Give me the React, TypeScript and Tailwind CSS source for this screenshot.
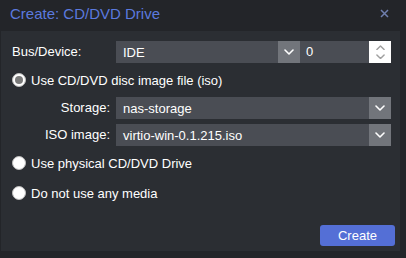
import React from "react";

const Chevron = ({ up = false, color = "#ffffff", w = 10 }: { up?: boolean; color?: string; w?: number }) => (
  <svg width={w} height={w * 0.6} viewBox="0 0 10 6" fill="none">
    <path d={up ? "M1 5 L5 1 L9 5" : "M1 1 L5 5 L9 1"} stroke={color} strokeWidth="1.6" strokeLinecap="round" strokeLinejoin="round" />
  </svg>
);

const Select = ({ value, className }: { value: string; className: string }) => (
  <div className={`flex h-[22px] bg-[#4a4d54] ${className}`}>
    <div className="flex-1 pl-[7px] flex items-center text-white text-[13px] leading-none">{value}</div>
    <div className="w-[22px] bg-[#72757b] flex items-center justify-center">
      <Chevron />
    </div>
  </div>
);

const Radio = ({ checked, label, className }: { checked?: boolean; label: string; className: string }) => (
  <div className={`flex items-center h-[20px] ${className}`}>
    <div className="w-[14px] h-[14px] rounded-full bg-white border border-[#bdbdbd] flex items-center justify-center">
      {checked && <div className="w-[8px] h-[8px] rounded-full bg-[#7a7a7a]" />}
    </div>
    <span className="ml-[5px] text-white text-[13px] leading-none">{label}</span>
  </div>
);

export default function App() {
  return (
    <div
      className="w-[406px] h-[258px] bg-[#232529] flex flex-col overflow-hidden"
      style={{ fontFamily: '"Liberation Sans", Arial, sans-serif' }}
    >
      <div className="h-[31px] flex items-center justify-between pl-[10px] pr-[17px] pb-[4px]">
        <span className="text-[15px] text-[#5b79de] leading-none">Create: CD/DVD Drive</span>
        <svg width="9" height="9" viewBox="0 0 9 9">
          <path d="M1 1 L8 8 M8 1 L1 8" stroke="#6f7fae" strokeWidth="1.5" />
        </svg>
      </div>
      <div className="ml-[1px] mr-[6px] h-[220px] bg-[#2b2e33] flex flex-col pl-[11px] pr-[9px] pt-[10px]">
        <div className="flex items-center h-[22px]">
          <div className="w-[104px] text-white text-[13px]">Bus/Device:</div>
          <Select value="IDE" className="w-[184px]" />
          <div className="w-[69px] h-[22px] bg-[#4a4d54] flex items-center pl-[6px] text-white text-[13px]">0</div>
          <div className="w-[22px] h-[22px] bg-white flex flex-col items-center justify-center gap-[4px]">
            <Chevron up color="#a0a0a0" w={9} />
            <Chevron color="#a0a0a0" w={9} />
          </div>
        </div>
        <Radio checked label="Use CD/DVD disc image file (iso)" className="mt-[7px]" />
        <div className="flex items-center h-[22px] mt-[7px]">
          <div className="w-[104px] pr-[6px] text-right text-white text-[13px]">Storage:</div>
          <Select value="nas-storage" className="w-[275px]" />
        </div>
        <div className="flex items-center h-[22px] mt-[5px]">
          <div className="w-[104px] pr-[6px] text-right text-white text-[13px]">ISO image:</div>
          <Select value="virtio-win-0.1.215.iso" className="w-[275px]" />
        </div>
        <Radio label="Use physical CD/DVD Drive" className="mt-[7px]" />
        <Radio label="Do not use any media" className="mt-[10px]" />
        <div className="flex justify-end mt-[22px] -mr-[4px]">
          <button className="w-[75px] h-[21px] rounded-[3px] bg-[#546fd6] text-white text-[13px] leading-none">Create</button>
        </div>
      </div>
    </div>
  );
}
